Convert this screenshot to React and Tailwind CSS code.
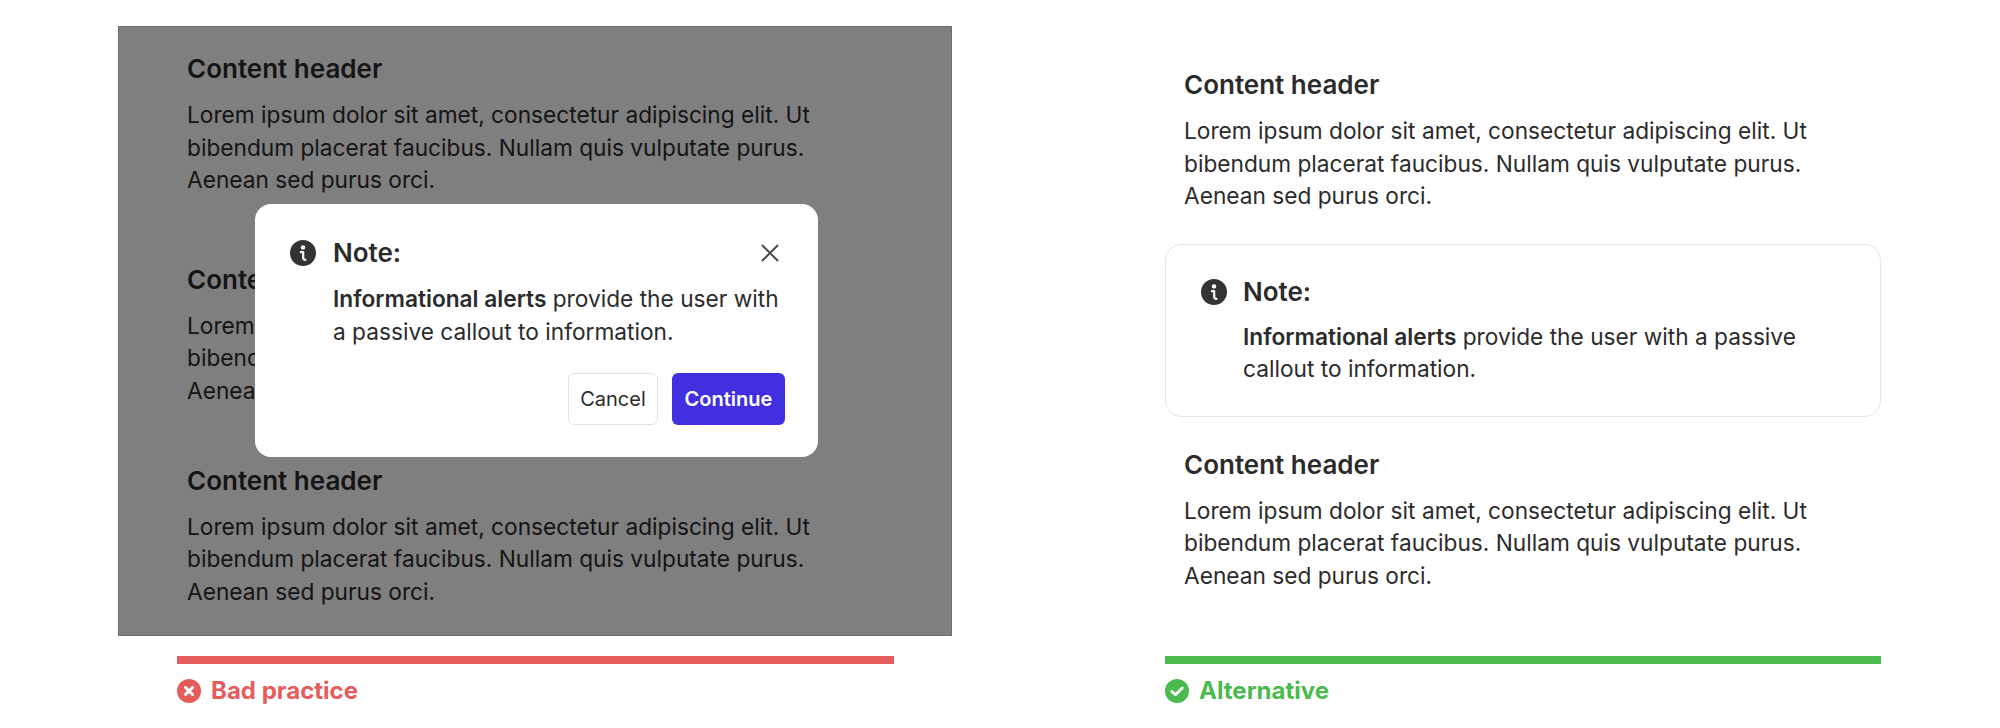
import React from 'react';

const Section = ({ className = '' }) => (
  <section className={className}>
    <h2 className="text-[26px] leading-[32px] font-semibold">Content header</h2>
    <p className="mt-[14px] text-[22.7px] leading-[32.6px]">
      Lorem ipsum dolor sit amet, consectetur adipiscing elit. Ut
      <br />
      bibendum placerat faucibus. Nullam quis vulputate purus.
      <br />
      Aenean sed purus orci.
    </p>
  </section>
);

const InfoIcon = () => (
  <svg width="26" height="26" viewBox="0 0 26 26" className="shrink-0">
    <circle cx="13" cy="13" r="13" fill="#333" />
    <circle cx="13" cy="7.4" r="2.2" fill="#fff" />
    <path d="M10.9 12.2h2.3v5.6c0 1.3.8 2 2.2 2" fill="none" stroke="#fff" strokeWidth="2.2" strokeLinecap="round" strokeLinejoin="round" />
  </svg>
);

const BadIcon = () => (
  <svg width="24" height="24" viewBox="0 0 24 24" className="shrink-0">
    <circle cx="12" cy="12" r="12" fill="#e55c5c" />
    <path d="M8.5 8.5l7 7M15.5 8.5l-7 7" stroke="#fff" strokeWidth="3" strokeLinecap="round" />
  </svg>
);

const GoodIcon = () => (
  <svg width="24" height="24" viewBox="0 0 24 24" className="shrink-0">
    <circle cx="12" cy="12" r="12" fill="#4cbb4f" />
    <path d="M6.8 12.4l3.6 3.3 6.9-6.7" fill="none" stroke="#fff" strokeWidth="2.8" strokeLinecap="round" strokeLinejoin="round" />
  </svg>
);

const Verdict = ({ barColor, textColor, icon, label }) => (
  <div>
    <div className={`h-[8px] ${barColor}`} />
    <div className={`mt-[15px] flex items-center gap-[10px] text-[24px] leading-[24px] font-bold ${textColor}`}>
      {icon}
      <span>{label}</span>
    </div>
  </div>
);

const App = () => {
  return (
    <div className="flex h-[728px] w-[2000px] overflow-hidden bg-white font-['Inter',sans-serif] text-[#2b2b2b]">
      <div className="ml-[118px] w-[834px] pt-[26px]">
        <div className="relative h-[610px] border border-[#6f6f6f] pl-[68px] pt-[26px]">
          <Section />
          <Section className="mt-[67px]" />
          <Section className="mt-[57px]" />
          <div className="absolute inset-0 bg-black/50" />
          <div className="absolute left-[136px] top-[177px] h-[253px] w-[563px] rounded-[16px] bg-white pl-[35px] pr-[33px] pt-[33px]">
            <div className="flex items-center gap-[17px]">
              <InfoIcon />
              <span className="text-[26px] leading-[32px] font-semibold">Note:</span>
              <svg width="18" height="18" viewBox="0 0 18 18" className="ml-auto mr-[6px]">
                <path d="M1 1l16 16M17 1L1 17" stroke="#4a4a4a" strokeWidth="2" />
              </svg>
            </div>
            <p className="mt-[14px] pl-[43px] text-[22.7px] leading-[32.6px]">
              <b className="font-semibold">Informational alerts</b> provide the user with
              <br />
              a passive callout to information.
            </p>
            <div className="mt-[25px] flex justify-end gap-[14px]">
              <button className="h-[52px] w-[90px] rounded-[6px] border border-[#e2e2e2] text-[20px]">Cancel</button>
              <button className="h-[52px] w-[113px] rounded-[6px] bg-[#4230e0] text-[20px] font-semibold text-white">Continue</button>
            </div>
          </div>
        </div>
        <div className="ml-[59px] mt-[20px] w-[717px]">
          <Verdict barColor="bg-[#e55c5c]" textColor="text-[#e55c5c]" icon={<BadIcon />} label="Bad practice" />
        </div>
      </div>

      <div className="ml-[213px] w-[716px] pt-[69px]">
        <Section className="pl-[19px]" />
        <div className="mt-[31px] h-[173px] rounded-[16px] border border-[#e6e6e6] pl-[35px] pt-[31px]">
          <div className="flex items-center gap-[16px]">
            <InfoIcon />
            <span className="text-[26px] leading-[32px] font-semibold">Note:</span>
          </div>
          <p className="mt-[13px] pl-[42px] text-[22.7px] leading-[32.6px]">
            <b className="font-semibold">Informational alerts</b> provide the user with a passive
            <br />
            callout to information.
          </p>
        </div>
        <Section className="mt-[32px] pl-[19px]" />
        <div className="mt-[63px]">
          <Verdict barColor="bg-[#4cbb4f]" textColor="text-[#4cbb4f]" icon={<GoodIcon />} label="Alternative" />
        </div>
      </div>
    </div>
  );
};

export default App;
